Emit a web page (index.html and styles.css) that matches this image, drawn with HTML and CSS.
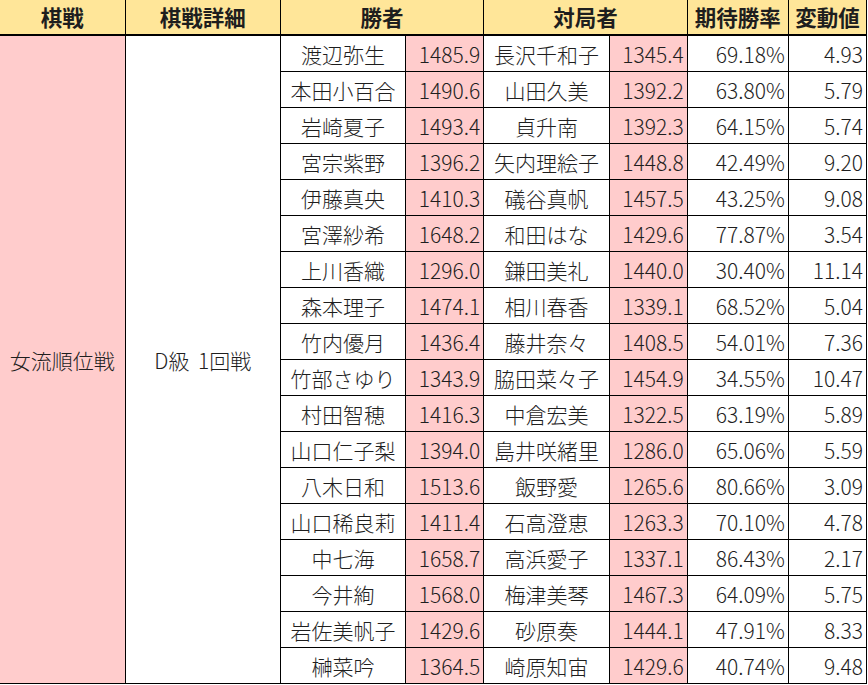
FILE: index.html
```html
<!DOCTYPE html>
<html lang="ja">
<head>
<meta charset="utf-8">
<link rel="stylesheet" href="styles.css">
</head>
<body>
<table class="tbl">
<colgroup>
<col class="c-kisen"><col class="c-detail"><col class="c-name"><col class="c-score"><col class="c-name"><col class="c-score"><col class="c-rate"><col class="c-chg">
</colgroup>
<thead>
<tr><th>棋戦</th><th>棋戦詳細</th><th colspan="2">勝者</th><th colspan="2">対局者</th><th>期待勝率</th><th>変動値</th></tr>
</thead>
<tbody>
<tr><td rowspan="18" class="kisen">女流順位戦</td><td rowspan="18" class="detail">D級&nbsp;1回戦</td><td class="nm">渡辺弥生</td><td class="sc">1485.9</td><td class="nm">長沢千和子</td><td class="sc">1345.4</td><td class="num">69.18%</td><td class="num">4.93</td></tr>
<tr><td class="nm">本田小百合</td><td class="sc">1490.6</td><td class="nm">山田久美</td><td class="sc">1392.2</td><td class="num">63.80%</td><td class="num">5.79</td></tr>
<tr><td class="nm">岩崎夏子</td><td class="sc">1493.4</td><td class="nm">貞升南</td><td class="sc">1392.3</td><td class="num">64.15%</td><td class="num">5.74</td></tr>
<tr><td class="nm">宮宗紫野</td><td class="sc">1396.2</td><td class="nm">矢内理絵子</td><td class="sc">1448.8</td><td class="num">42.49%</td><td class="num">9.20</td></tr>
<tr><td class="nm">伊藤真央</td><td class="sc">1410.3</td><td class="nm">礒谷真帆</td><td class="sc">1457.5</td><td class="num">43.25%</td><td class="num">9.08</td></tr>
<tr><td class="nm">宮澤紗希</td><td class="sc">1648.2</td><td class="nm">和田はな</td><td class="sc">1429.6</td><td class="num">77.87%</td><td class="num">3.54</td></tr>
<tr><td class="nm">上川香織</td><td class="sc">1296.0</td><td class="nm">鎌田美礼</td><td class="sc">1440.0</td><td class="num">30.40%</td><td class="num">11.14</td></tr>
<tr><td class="nm">森本理子</td><td class="sc">1474.1</td><td class="nm">相川春香</td><td class="sc">1339.1</td><td class="num">68.52%</td><td class="num">5.04</td></tr>
<tr><td class="nm">竹内優月</td><td class="sc">1436.4</td><td class="nm">藤井奈々</td><td class="sc">1408.5</td><td class="num">54.01%</td><td class="num">7.36</td></tr>
<tr><td class="nm">竹部さゆり</td><td class="sc">1343.9</td><td class="nm">脇田菜々子</td><td class="sc">1454.9</td><td class="num">34.55%</td><td class="num">10.47</td></tr>
<tr><td class="nm">村田智穂</td><td class="sc">1416.3</td><td class="nm">中倉宏美</td><td class="sc">1322.5</td><td class="num">63.19%</td><td class="num">5.89</td></tr>
<tr><td class="nm">山口仁子梨</td><td class="sc">1394.0</td><td class="nm">島井咲緒里</td><td class="sc">1286.0</td><td class="num">65.06%</td><td class="num">5.59</td></tr>
<tr><td class="nm">八木日和</td><td class="sc">1513.6</td><td class="nm">飯野愛</td><td class="sc">1265.6</td><td class="num">80.66%</td><td class="num">3.09</td></tr>
<tr><td class="nm">山口稀良莉</td><td class="sc">1411.4</td><td class="nm">石高澄恵</td><td class="sc">1263.3</td><td class="num">70.10%</td><td class="num">4.78</td></tr>
<tr><td class="nm">中七海</td><td class="sc">1658.7</td><td class="nm">高浜愛子</td><td class="sc">1337.1</td><td class="num">86.43%</td><td class="num">2.17</td></tr>
<tr><td class="nm">今井絢</td><td class="sc">1568.0</td><td class="nm">梅津美琴</td><td class="sc">1467.3</td><td class="num">64.09%</td><td class="num">5.75</td></tr>
<tr><td class="nm">岩佐美帆子</td><td class="sc">1429.6</td><td class="nm">砂原奏</td><td class="sc">1444.1</td><td class="num">47.91%</td><td class="num">8.33</td></tr>
<tr><td class="nm">榊菜吟</td><td class="sc">1364.5</td><td class="nm">崎原知宙</td><td class="sc">1429.6</td><td class="num">40.74%</td><td class="num">9.48</td></tr>
</tbody>
</table>
</body>
</html>
```
FILE: styles.css
```css
html, body {
  margin: 0;
  padding: 0;
  background: #ffffff;
}
body {
  font-family: "Noto Sans CJK JP", "Noto Sans", sans-serif;
  color: #1e1e1e;
}
.tbl {
  border-collapse: collapse;
  table-layout: fixed;
  width: 867px;
  font-size: 21px;
  font-weight: 300;
}
.c-kisen { width: 125px; }
.c-detail { width: 155px; }
.c-name { width: 125px; }
.c-score { width: 78px; }
.c-rate { width: 101px; }
.c-chg { width: 78px; }

.tbl th, .tbl td {
  border: 1px solid #000;
  padding: 0 3px;
  height: 35px;
  line-height: 24px;
  white-space: nowrap;
  overflow: hidden;
}
.tbl th {
  background: #ffe699;
  font-weight: bold;
  text-align: center;
  border-top: none;
  border-bottom: 2px solid #000;
  height: 34px;
  font-size: 21.5px;
}
.tbl th:first-child, .tbl td.kisen {
  border-left: none;
}
.kisen {
  background: #ffcccc;
  text-align: center;
}
.detail {
  text-align: center;
  word-spacing: 4px;
}
.nm {
  text-align: center;
}
.sc {
  background: #ffcccc;
  text-align: right;
}
.num {
  text-align: right;
}
```
